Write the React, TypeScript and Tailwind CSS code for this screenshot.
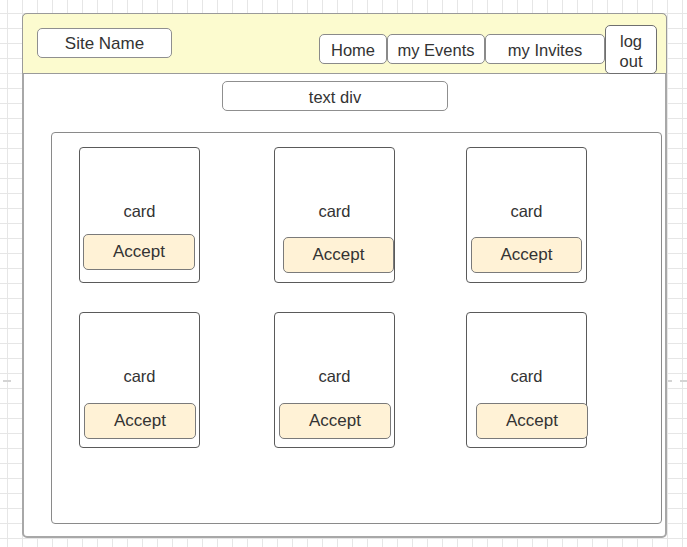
import React from 'react';

const cards = [
  { btn: 'ml-[3px] mt-[13px] w-[112px]' },
  { btn: 'ml-[8px] mt-[16px] w-[111px]' },
  { btn: 'ml-[4px] mt-[16px] w-[111px]' },
  { btn: 'ml-[4px] mt-[17px] w-[112px]' },
  { btn: 'ml-[4px] mt-[17px] w-[112px]' },
  { btn: 'ml-[9px] mt-[17px] w-[112px]' },
];

const navBtn =
  'h-[30px] mt-[20px] flex items-center justify-center bg-white border border-[#8a8a8a] rounded-[5px] text-[16.5px] text-[#333] pt-[2px]';

export default function App() {
  return (
    <div
      className="relative w-[687px] h-[547px] overflow-hidden bg-white bg-[linear-gradient(to_right,#e6e6e6_1px,transparent_1px),linear-gradient(to_bottom,#e6e6e6_1px,transparent_1px)] bg-[size:15px_15px] bg-[position:7px_13px] pt-[13px] pl-[22px]"
      style={{ fontFamily: '"Liberation Sans", Arial, sans-serif' }}
    >
      {/* little side marks */}
      <div className="absolute left-[3px] top-[380px] w-[8px] h-[2px] bg-[#d4d4d4]" />
      <div className="absolute left-[668px] top-[380px] w-[4px] h-[2px] bg-[#d4d4d4]" />
      <div className="absolute left-[680px] top-[380px] w-[7px] h-[2px] bg-[#d4d4d4]" />

      <div className="w-[645px] h-[525px] bg-white border-2 border-[#a8a8a8] rounded-[5px] flex flex-col">
        {/* header */}
        <div className="h-[61px] -mx-[2px] -mt-[2px] bg-[#fcfbcf] border border-[#9a9a9a] rounded-t-[5px] flex items-start">
          <div className="ml-[14px] mt-[14px] w-[135px] h-[30px] bg-white border border-[#8f8f8f] rounded-[5px] flex items-center justify-center pt-[2px] text-[17px] text-[#333]">
            Site Name
          </div>
          <div className="ml-auto mr-[9px] flex items-start">
            <div className={`${navBtn} w-[68px]`}>Home</div>
            <div className={`${navBtn} w-[98px]`}>my Events</div>
            <div className={`${navBtn} w-[120px]`}>my Invites</div>
            <div className="mt-[11px] w-[52px] h-[49px] bg-white border border-[#6f6f6f] rounded-[5px] flex flex-col items-center justify-center pt-[2px] text-[16.5px] leading-[20px] text-[#333]">
              <span>log</span>
              <span>out</span>
            </div>
          </div>
        </div>

        {/* text div */}
        <div className="ml-[198px] mt-[7px] w-[226px] h-[30px] bg-white border border-[#8f8f8f] rounded-[5px] flex items-center justify-center pt-[3px] text-[16.5px] text-[#333]">
          text div
        </div>

        {/* content container */}
        <div className="ml-[27px] mt-[21px] w-[611px] h-[392px] border-[1.5px] border-[#8a8a8a] rounded-[4px] pl-[27px] pt-[14px]">
          <div className="grid grid-cols-[195px_192px_121px] gap-y-[29px]">
            {cards.map((c, i) => (
              <div
                key={i}
                className="w-[121px] h-[136px] border border-[#5a5a5a] rounded-[4px] flex flex-col"
              >
                <div className="mt-[53px] text-center text-[16.5px] leading-[20px] text-[#333]">card</div>
                <div
                  className={`${c.btn} h-[36px] bg-[#fff2d6] border border-[#7a7a7a] rounded-[5px] flex items-center justify-center text-[17px] text-[#333]`}
                >
                  Accept
                </div>
              </div>
            ))}
          </div>
        </div>
      </div>
    </div>
  );
}
